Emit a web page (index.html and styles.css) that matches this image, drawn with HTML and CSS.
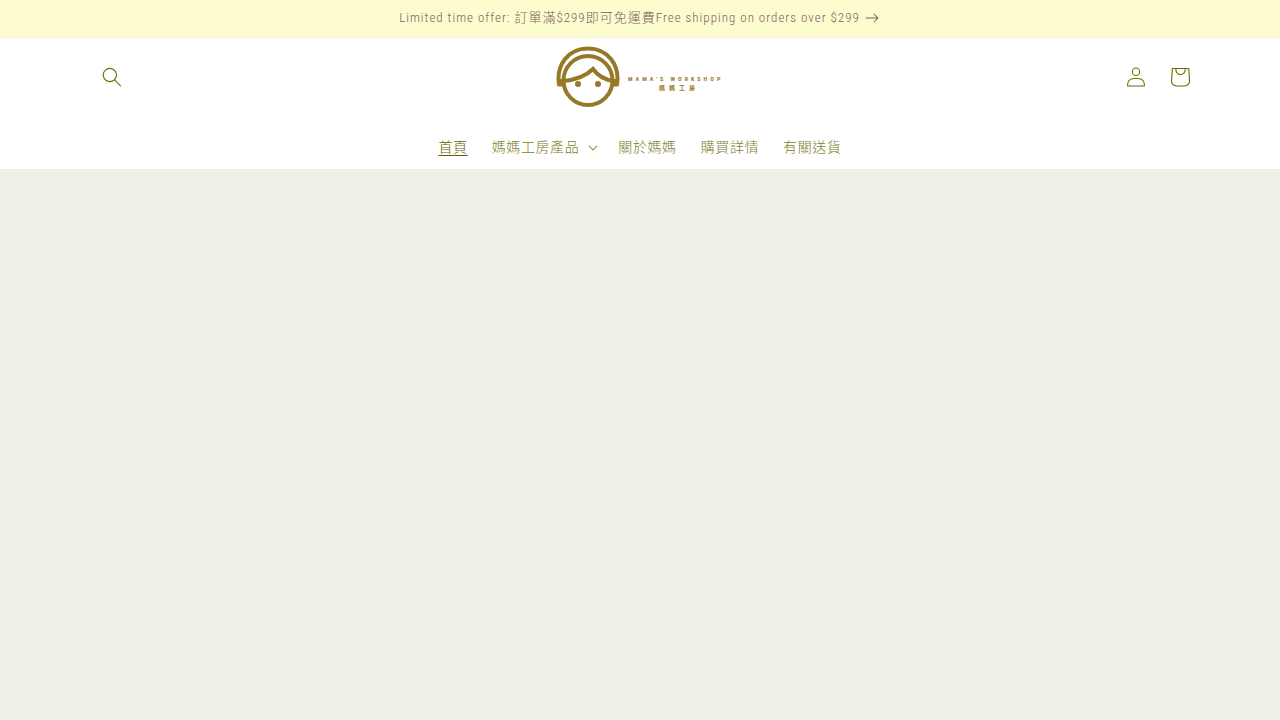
FILE: index.html
```html
<!DOCTYPE html>
<html lang="zh-Hant">
<head>
<meta charset="utf-8">
<meta name="viewport" content="width=device-width, initial-scale=1">
<title>Mama's Workshop</title>
<link rel="stylesheet" href="styles.css">
</head>
<body>
<div class="announcement">
  <a class="announcement-link" href="#shipping">
    <span>Limited time offer: 訂單滿$299即可免運費Free shipping on orders over $299</span>
    <svg class="arrow" viewBox="0 0 14 10" aria-hidden="true"><path d="M8.537.808a.5.5 0 01.817-.162l4 4a.5.5 0 010 .708l-4 4a.5.5 0 11-.708-.708L11.793 5.5H1a.5.5 0 010-1h10.793L8.646 1.354a.5.5 0 01-.109-.546z"/></svg>
  </a>
</div>
<header class="header">
  <div class="header-top">
    <div class="header-left">
      <button class="icon-button" type="button" aria-label="搜尋">
        <svg class="icon" viewBox="0 0 18 19" aria-hidden="true"><path fill-rule="evenodd" d="M11.03 11.68A5.784 5.784 0 112.85 3.5a5.784 5.784 0 018.18 8.18zm.26 1.12a6.78 6.78 0 11.72-.7l5.4 5.4a.5.5 0 11-.71.7l-5.41-5.4z"/></svg>
      </button>
    </div>
    <a class="logo-link" href="#home" aria-label="Mama's Workshop 媽媽工房">
      <svg class="logo" viewBox="0 0 170 64" aria-hidden="true">
        <g class="logo-lines">
          <path d="M4 40C1 20 13 3.500 33 3.500S65 20 62 40"/>
          <circle cx="33" cy="35.500" r="24.500"/>
          <path d="M8 36C20 35 30 32 38 24C43 31 50 35 59 36"/>
        </g>
        <path class="logo-fill" d="M2 34H8L10 41.500H2.500zM64 34H58L56 41.500H63.500z"/>
        <circle class="logo-fill" cx="23" cy="39" r="3"/>
        <circle class="logo-fill" cx="43" cy="39" r="3"/>
        <text class="logo-name" x="73" y="36">MAMA'S WORKSHOP</text>
        <text class="logo-name-zh" x="104" y="45">媽媽工房</text>
      </svg>
    </a>
    <div class="header-right">
      <a class="icon-button" href="#account" aria-label="登入">
        <svg class="icon" viewBox="0 0 18 19" aria-hidden="true"><path fill-rule="evenodd" d="M6 4.500a3 3 0 116 0 3 3 0 01-6 0zm3-4a4 4 0 100 8 4 4 0 000-8zm5.580 12.150c1.120.82 1.830 2.240 1.910 4.850H1.510c.08-2.600.79-4.030 1.900-4.850C4.660 11.750 6.500 11.500 9 11.500s4.350.26 5.580 1.150zM9 10.500c-2.500 0-4.650.24-6.170 1.350C1.270 12.980.5 14.930.5 18v.5h17V18c0-3.070-.77-5.020-2.330-6.150-1.520-1.100-3.670-1.350-6.170-1.350z"/></svg>
      </a>
      <a class="icon-button" href="#cart" aria-label="購物車">
        <svg class="cart" viewBox="0 0 40 40" aria-hidden="true"><path fill-rule="evenodd" d="M15.750 11.800h-3.160l-.77 11.600a5 5 0 0 0 4.990 5.340h7.380a5 5 0 0 0 4.990-5.330L28.400 11.800zm0 1h-2.220l-.71 10.670a4 4 0 0 0 3.990 4.270h7.380a4 4 0 0 0 4-4.270l-.72-10.670h-2.220v.63a4.750 4.750 0 1 1-9.500 0zm8.500 0h-7.500v.63a3.750 3.750 0 1 0 7.500 0z"/></svg>
      </a>
    </div>
  </div>
  <nav class="menu">
    <a class="menu-item menu-current" href="#home" aria-current="page"><span>首頁</span></a>
    <button class="menu-item menu-toggle" type="button" aria-expanded="false"><span>媽媽工房產品</span><svg class="caret" viewBox="0 0 10 6" aria-hidden="true"><path d="M9.354.646a.5.5 0 00-.708 0L5 4.293 1.354.646a.5.5 0 00-.708.708l4 4a.5.5 0 00.708 0l4-4a.5.5 0 000-.708z"/></svg></button>
    <a class="menu-item" href="#about"><span>關於媽媽</span></a>
    <a class="menu-item" href="#purchase"><span>購買詳情</span></a>
    <a class="menu-item" href="#delivery"><span>有關送貨</span></a>
  </nav>
</header>
<main class="banner"></main>
</body>
</html>
```
FILE: styles.css
```css
* { box-sizing: border-box; }
body {
  margin: 0;
  min-height: 100vh;
  display: flex;
  flex-direction: column;
  background: #fff;
  color: #6b6b00;
  font-family: "Roboto Condensed", Roboto, "Noto Sans CJK TC", sans-serif;
  font-weight: 300;
}
a { color: inherit; text-decoration: none; }
button { border: 0; padding: 0; background: none; color: inherit; font: inherit; cursor: pointer; }
svg { fill: currentColor; display: block; }

.announcement { background: #fcfccf; border-bottom: 1px solid #f0efe0; color: #806060; }
.announcement-link {
  display: flex;
  justify-content: center;
  align-items: center;
  gap: 5px;
  min-height: 37px;
  padding: 0 2px 2px 0;
  font-size: 13px;
  line-height: 20px;
  letter-spacing: 1px;
}
.arrow { width: 14px; height: 10px; }

.header { width: 100%; max-width: 1200px; margin: 0 auto; padding: 6px 50px 2px; }
.header-top { display: grid; grid-template-columns: 1fr auto 1fr; align-items: center; }
.header-right { display: flex; justify-content: flex-end; margin-right: -12px; }
.icon-button { width: 44px; height: 44px; display: flex; align-items: center; justify-content: center; }
.icon { width: 20px; height: 20px; }
.cart { width: 44px; height: 44px; }
.logo-link { display: block; padding: 1px 0 19px; }
.header-left, .header-right { padding-bottom: 18px; }
.logo { width: 170px; height: 64px; }
.logo-lines { fill: none; stroke: #957927; stroke-width: 4; }
.logo-fill { fill: #957927; }
.logo-name { fill: #957927; font: 700 6px "Roboto Condensed", Roboto, sans-serif; letter-spacing: 3px; }
.logo-name-zh { fill: #957927; font: 700 6px "Noto Sans CJK TC", sans-serif; letter-spacing: 4px; }

.menu { display: flex; justify-content: center; }
.menu-item {
  display: flex;
  align-items: center;
  gap: 9px;
  padding: 8px 12px;
  font-size: 14px;
  line-height: 23px;
  letter-spacing: 0.6px;
  color: #807d28;
}
.menu-toggle { padding-right: 8px; }
.menu-current { color: #5f5f00; }
.menu-current span { text-decoration: underline; text-underline-offset: 3px; }
.caret { width: 10px; height: 6px; }

.banner { flex: 1; background: #f0f0e8; }
```
